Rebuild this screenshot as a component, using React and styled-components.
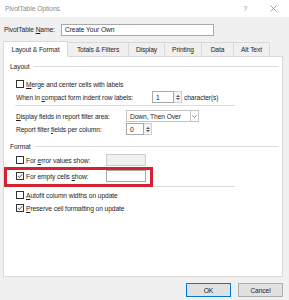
import React from 'react';
import styled, { createGlobalStyle } from 'styled-components';

const GlobalStyle = createGlobalStyle`
  html, body {
    margin: 0;
    padding: 0;
    background: #f0f0f0;
  }
  body {
    font-family: "Liberation Sans", Arial, sans-serif;
    font-size: 6.7px;
    letter-spacing: -0.1px;
    color: #1e1e1e;
  }
`;

const Window = styled.div`
  width: 289px;
  height: 300px;
  background: #f0f0f0;
  display: flex;
  flex-direction: column;
  overflow: hidden;
`;

const TitleBar = styled.div`
  height: 17px;
  background: #ffffff;
  display: flex;
  align-items: center;
  padding-left: 5px;
`;

const Title = styled.span`
  color: #8c8c8c;
  font-size: 6.8px;
`;

const Controls = styled.div`
  margin-left: auto;
  display: flex;
  align-items: center;
  gap: 23px;
  padding-right: 12px;
  color: #8c8c8c;
`;

const NameRow = styled.div`
  margin-top: 6px;
  height: 13px;
  display: flex;
  align-items: center;
  padding-left: 4px;
`;

const NameLabel = styled.span`
  width: 57px;
`;

const TextBox = styled.div`
  width: ${p => p.width}px;
  height: 12px;
  box-sizing: border-box;
  border: 1px solid ${p => (p.disabled ? '#cccccc' : '#a8a8a8')};
  background: ${p => (p.disabled ? '#f0f0f0' : '#ffffff')};
  display: flex;
  align-items: center;
  padding-left: 3px;
`;

const TabBar = styled.div`
  margin-top: 5px;
  height: 15px;
  display: flex;
  align-items: flex-end;
  padding-left: 3px;
  position: relative;
  z-index: 1;
`;

const Tab = styled.div`
  width: ${p => p.width}px;
  height: ${p => (p.active ? 16 : 14)}px;
  box-sizing: border-box;
  border: 1px solid #d9d9d9;
  border-left: ${p => (p.first || p.active ? '1px solid #d9d9d9' : 'none')};
  border-bottom: ${p => (p.active ? '1px solid #ffffff' : 'none')};
  background: ${p => (p.active ? '#ffffff' : '#f0f0f0')};
  margin-bottom: ${p => (p.active ? '-1px' : '0')};
  display: flex;
  align-items: center;
  justify-content: center;
`;

const Panel = styled.div`
  position: relative;
  margin: 0 6px 0 3px;
  height: 221px;
  box-sizing: border-box;
  background: #ffffff;
  border: 1px solid #d9d9d9;
  display: flex;
  flex-direction: column;
`;

const GroupHeader = styled.div`
  margin-top: ${p => p.top}px;
  height: 10px;
  display: flex;
  align-items: center;
  gap: 4px;
  padding-left: 6px;
  padding-right: 3px;
  &::after {
    content: '';
    flex: 1;
    height: 1px;
    background: #dcdcdc;
  }
`;

const Row = styled.div`
  margin-top: ${p => p.top}px;
  height: ${p => p.h || 12}px;
  display: flex;
  align-items: center;
  padding-left: 12px;
`;

const Label = styled.span`
  width: ${p => (p.width ? `${p.width}px` : 'auto')};
  flex: none;
  white-space: nowrap;
`;

const Separator = styled.div`
  margin: ${p => p.top}px 0 0 11px;
  width: 220px;
  height: 1px;
  background: #dcdcdc;
`;

const Box = styled.span`
  width: 8px;
  height: 8px;
  box-sizing: border-box;
  border: 1px solid #333333;
  background: #ffffff;
  margin-right: 2px;
  display: flex;
  align-items: center;
  justify-content: center;
  flex: none;
`;

const Spin = styled.div`
  width: 8px;
  height: 12px;
  box-sizing: border-box;
  border: 1px solid #d0d0d0;
  border-left: none;
  background: #f3f3f3;
  display: flex;
  flex-direction: column;
  align-items: center;
  justify-content: center;
  gap: 1px;
`;

const Arrow = styled.span`
  width: 0;
  height: 0;
  border-left: 2px solid transparent;
  border-right: 2px solid transparent;
  ${p => (p.down ? 'border-top: 2px solid #555;' : 'border-bottom: 2px solid #555;')}
`;

const Select = styled.div`
  width: 73px;
  height: 12px;
  box-sizing: border-box;
  border: 1px solid #c4c4c4;
  background: #ffffff;
  display: flex;
  align-items: center;
  padding-left: 3px;
`;

const SelectButton = styled.span`
  margin-left: auto;
  width: 8px;
  height: 10px;
  box-sizing: border-box;
  border-left: 1px solid #c4c4c4;
  display: flex;
  align-items: center;
  justify-content: center;
`;

const Suffix = styled.span`
  margin-left: 2px;
`;

const Highlight = styled.div`
  position: absolute;
  left: 0;
  top: 110px;
  width: 149px;
  height: 20px;
  box-sizing: border-box;
  border: 3px solid #d32231;
  pointer-events: none;
`;

const Footer = styled.div`
  flex: 1;
  display: flex;
  justify-content: flex-end;
  align-items: flex-start;
  gap: 7px;
  padding: 6px 6px 0 0;
`;

const Button = styled.div`
  width: 45px;
  height: 14px;
  box-sizing: border-box;
  border: 1px solid ${p => (p.primary ? '#0078d7' : '#adadad')};
  background: #e1e1e1;
  display: flex;
  align-items: center;
  justify-content: center;
`;

const U = styled.span`
  text-decoration: underline;
`;

const Check = ({ checked }) => (
  <Box>
    {checked && (
      <svg width="6" height="6" viewBox="0 0 6 6">
        <path d="M0.8 3.1 L2.3 4.6 L5.2 1.2" fill="none" stroke="#333" strokeWidth="0.9" />
      </svg>
    )}
  </Box>
);

const Spinner = () => (
  <Spin>
    <Arrow />
    <Arrow down />
  </Spin>
);

const tabs = [
  { label: 'Layout & Format', width: 65, active: true },
  { label: 'Totals & Filters', width: 61 },
  { label: 'Display', width: 36 },
  { label: 'Printing', width: 37 },
  { label: 'Data', width: 32 },
  { label: 'Alt Text', width: 36 },
];

export default function App() {
  return (
    <>
      <GlobalStyle />
      <Window>
        <TitleBar>
          <Title>PivotTable Options</Title>
          <Controls>
            <span>?</span>
            <svg width="7" height="7" viewBox="0 0 7 7">
              <path d="M0.5 0.5 L6.5 6.5 M6.5 0.5 L0.5 6.5" stroke="#8c8c8c" strokeWidth="0.8" />
            </svg>
          </Controls>
        </TitleBar>

        <NameRow>
          <NameLabel>
            PivotTable <U>N</U>ame:
          </NameLabel>
          <TextBox width={153}>Create Your Own</TextBox>
        </NameRow>

        <TabBar>
          {tabs.map((t, i) => (
            <Tab key={t.label} width={t.width} active={t.active} first={i === 0}>
              {t.label}
            </Tab>
          ))}
        </TabBar>

        <Panel>
          <GroupHeader top={4}>Layout</GroupHeader>
          <Row top={8} h={10}>
            <Check />
            <Label>
              <U>M</U>erge and center cells with labels
            </Label>
          </Row>
          <Row top={2}>
            <Label width={136}>
              When in <U>c</U>ompact form indent row labels:
            </Label>
            <TextBox width={22}>1</TextBox>
            <Spinner />
            <Suffix>character(s)</Suffix>
          </Row>
          <Separator top={2} />
          <Row top={4}>
            <Label width={110}>
              <U>D</U>isplay fields in report filter area:
            </Label>
            <Select>
              Down, Then Over
              <SelectButton>
                <svg width="5" height="3" viewBox="0 0 5 3">
                  <path d="M0.3 0.3 L2.5 2.5 L4.7 0.3" fill="none" stroke="#555" strokeWidth="0.7" />
                </svg>
              </SelectButton>
            </Select>
          </Row>
          <Row top={1}>
            <Label width={110}>
              Report filter <U>f</U>ields per column:
            </Label>
            <TextBox width={18}>0</TextBox>
            <Spinner />
          </Row>

          <GroupHeader top={6}>Format</GroupHeader>
          <Row top={3}>
            <Check />
            <Label width={80}>
              For <U>e</U>rror values show:
            </Label>
            <TextBox width={40} disabled />
          </Row>
          <Row top={4}>
            <Check checked />
            <Label width={80}>
              For empty cells <U>s</U>how:
            </Label>
            <TextBox width={40} />
          </Row>
          <Separator top={4} />
          <Row top={3} h={10}>
            <Check />
            <Label>
              <U>A</U>utofit column widths on update
            </Label>
          </Row>
          <Row top={3} h={10}>
            <Check checked />
            <Label>
              <U>P</U>reserve cell formatting on update
            </Label>
          </Row>

          <Highlight />
        </Panel>

        <Footer>
          <Button primary>OK</Button>
          <Button>Cancel</Button>
        </Footer>
      </Window>
    </>
  );
}
